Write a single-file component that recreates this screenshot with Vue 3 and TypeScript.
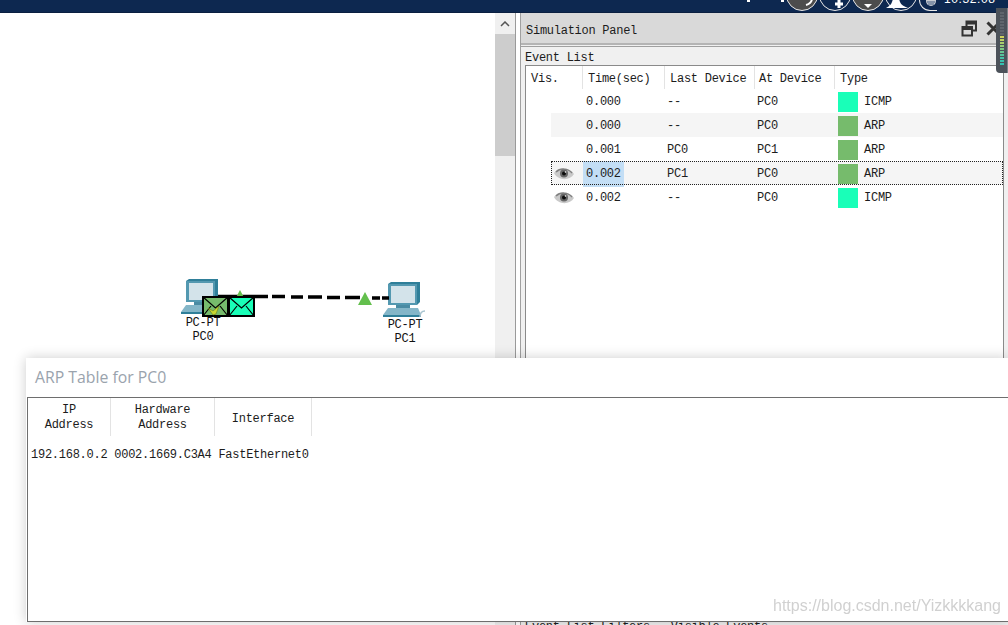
<script setup lang="ts">
interface EventRow {
  seen: boolean
  time: string
  last: string
  at: string
  type: string
  color: string
  striped?: boolean
  current?: boolean
}

const events: EventRow[] = [
  { seen: false, time: '0.000', last: '--', at: 'PC0', type: 'ICMP', color: '#19ffb8' },
  { seen: false, time: '0.000', last: '--', at: 'PC0', type: 'ARP', color: '#76bb6c', striped: true },
  { seen: false, time: '0.001', last: 'PC0', at: 'PC1', type: 'ARP', color: '#76bb6c' },
  { seen: true, time: '0.002', last: 'PC1', at: 'PC0', type: 'ARP', color: '#76bb6c', current: true },
  { seen: true, time: '0.002', last: '--', at: 'PC0', type: 'ICMP', color: '#19ffb8' }
]

const meter = ['#5f656c', '#5f656c', '#5f656c', '#5f656c', '#5f656c', '#5f656c', '#5f656c', '#5f656c', '#cdd35a', '#bdd062', '#a9cd6c', '#93ca78', '#7dc784', '#68c490', '#55c29c', '#46c0a6', '#3cc0ac', '#34c0b0']
</script>

<template>
  <div class="screen">
    <header class="taskbar">
      <span class="tray-dot dot-a"></span>
      <span class="tray-dot dot-b"></span>
      <span class="tray tray-gray"><svg width="30" height="30" viewBox="0 0 30 30"><path d="M25 19c-.5 3-2 5-6 6" fill="none" stroke="#fff" stroke-width="2" /></svg></span>
      <span class="tray"><svg width="30" height="30" viewBox="0 0 30 30"><path d="M19 20v8M15 24h8" fill="none" stroke="#fff" stroke-width="3" /></svg></span>
      <span class="tray tray-gray"><svg width="30" height="30" viewBox="0 0 30 30"><path d="M11 24h8l-4 4z" fill="#fff" /></svg></span>
      <span class="tray"><svg width="30" height="30" viewBox="0 0 30 30"><path d="M0 28c3-2 5-3 6-6l1-3h6l1 3c1 3 4 4 8 6z" fill="#fff" /></svg></span>
      <span class="tray-small"><svg width="18" height="8" viewBox="0 0 18 8"><circle cx="11" cy="1" r="5" fill="#c8ccd2" /><path d="M7 2h8M8 4h6" stroke="#405a80" stroke-width="1" /></svg></span>
      <span class="clock">10:32:08</span>
    </header>

    <main class="desk">
      <section class="workspace">
        <div class="node node-a">
          <svg class="pc" width="44" height="38" viewBox="0 0 44 38">
            <path d="M5 3l3-2h29v20l-3 3H5z" fill="#2f7f99" />
            <rect x="5" y="3" width="29" height="21" fill="#5398b0" />
            <rect x="8" y="5" width="24" height="17" fill="#d3e3ea" />
            <path d="M13 24h14v3H13z" fill="#4a8ba3" />
            <path d="M5 27h30l3 7H0z" fill="#84b6c8" />
            <path d="M0 34h38v2H0z" fill="#2f7f99" />
          </svg>
          <span class="node-label">PC-PT<br />PC0</span>
        </div>
        <div class="node node-b">
          <svg class="pc" width="44" height="38" viewBox="0 0 44 38">
            <path d="M5 3l3-2h29v20l-3 3H5z" fill="#2f7f99" />
            <rect x="5" y="3" width="29" height="21" fill="#5398b0" />
            <rect x="8" y="5" width="24" height="17" fill="#d3e3ea" />
            <path d="M13 24h14v3H13z" fill="#4a8ba3" />
            <path d="M5 27h30l3 7H0z" fill="#84b6c8" />
            <path d="M0 34h38v2H0z" fill="#2f7f99" />
            <path d="M37 36c0-4 1-6 5-6" fill="none" stroke="#a8c4d0" stroke-width="1.500" />
          </svg>
          <span class="node-label">PC-PT<br />PC1</span>
        </div>
        <svg class="link" width="172" height="8" viewBox="0 0 172 8">
          <path d="M0 3.500h50M54 3.500h13M73 4h12M90 4h14M109 4.500h13M127 4.500h15M154 5h8M164 5h7" stroke="#000" stroke-width="3.500" fill="none" />
        </svg>
        <span class="triangle triangle-back"></span>
        <span class="triangle triangle-front"></span>
        <svg class="envelope env-arp" width="27" height="21" viewBox="0 0 27 21">
          <rect x="1" y="1" width="25" height="19" fill="#76bb6c" stroke="#000" stroke-width="2" />
          <path d="M1 1l12.500 11L26 1M1 20l8-10M26 20l-8-10" fill="none" stroke="#000" stroke-width="1.200" />
          <path d="M6 12l5 3 6-5-3 8-3 1z" fill="#c8d830" stroke="#6c7a18" stroke-width="0.600" />
        </svg>
        <svg class="envelope env-icmp" width="27" height="21" viewBox="0 0 27 21">
          <rect x="1" y="1" width="25" height="19" fill="#19ffb8" stroke="#000" stroke-width="2" />
          <path d="M1 1l12.500 11L26 1M1 20l8-10M26 20l-8-10" fill="none" stroke="#000" stroke-width="1.200" />
        </svg>
      </section>

      <div class="scrollbar">
        <span class="scroll-arrow">
          <svg width="10" height="6" viewBox="0 0 10 6"><path d="M1 5l4-4 4 4" fill="none" stroke="#555" stroke-width="1.500" /></svg>
        </span>
        <span class="scroll-thumb"></span>
      </div>

      <aside class="panel">
        <div class="panel-head">
          <span class="panel-name">Simulation Panel</span>
          <svg class="restore" width="16" height="17" viewBox="0 0 16 17">
            <path d="M5.500 6V1.500h9.500v9h-4M5.500 3.500H15M1.500 7h9.500v8.500H1.500zM1.500 9H11" fill="none" stroke="#333" stroke-width="2" />
          </svg>
          <svg class="close" width="15" height="15" viewBox="0 0 15 15">
            <path d="M1.500 1.500l12 12M13.500 1.500l-12 12" fill="none" stroke="#333" stroke-width="3" />
          </svg>
        </div>
        <div class="event-box">
          <div class="event-title">Event List</div>
          <div class="event-table">
            <div class="row row-head">
              <span class="cell head-vis">Vis.</span>
              <span class="cell head-time">Time(sec)</span>
              <span class="cell head-last">Last Device</span>
              <span class="cell head-at">At Device</span>
              <span class="cell head-type">Type</span>
            </div>
            <div
              v-for="(ev, i) in events"
              :key="i"
              class="row"
              :class="{ striped: ev.striped, current: ev.current }"
            >
              <span class="cell cell-vis">
                <svg v-if="ev.seen" width="22" height="14" viewBox="0 0 22 14">
                  <path d="M1 6C5 0 16 0 21 7 17 14 5 14 1 6z" fill="#c9c9c9" />
                  <path d="M3 5c4-4 12-4 16 1" fill="none" stroke="#808080" stroke-width="1.500" />
                  <circle cx="11" cy="6.500" r="4" fill="#666" />
                  <circle cx="11" cy="6.500" r="2" fill="#0c0c0c" />
                  <circle cx="12.500" cy="5" r="0.800" fill="#fff" />
                </svg>
              </span>
              <span class="cell cell-time">{{ ev.time }}</span>
              <span class="cell">{{ ev.last }}</span>
              <span class="cell">{{ ev.at }}</span>
              <span class="cell cell-type">
                <i class="swatch" :style="{ background: ev.color }"></i>{{ ev.type }}
              </span>
            </div>
          </div>
        </div>
        <div class="filters">Event List Filters - Visible Events</div>
      </aside>
    </main>

    <div class="meter">
      <i v-for="(c, i) in meter" :key="i" :style="{ background: c }"></i>
    </div>

    <div class="arp-window">
      <div class="arp-title">ARP Table for PC0</div>
      <div class="arp-client">
        <div class="arp-head">
          <span class="arp-col col-ip">IP<br />Address</span>
          <span class="arp-col col-hw">Hardware<br />Address</span>
          <span class="arp-col col-if">Interface</span>
        </div>
        <div class="arp-row">192.168.0.2 0002.1669.C3A4 FastEthernet0</div>
      </div>
    </div>

    <div class="watermark">https://blog.csdn.net/Yizkkkkang</div>
  </div>
</template>

<style scoped>
.screen {
  position: relative;
  width: 1008px;
  height: 625px;
  overflow: hidden;
  background: #fff;
  display: flex;
  flex-direction: column;
  font-family: "Liberation Mono", "Noto Sans CJK SC", monospace;
  font-size: 12px;
  letter-spacing: -0.26px;
  color: #1c1c1c;
}

.taskbar {
  flex: none;
  height: 12px;
  background: #0d2850;
  border-bottom: 1px solid #0a1f40;
  overflow: hidden;
  display: flex;
  align-items: flex-end;
  justify-content: flex-end;
  gap: 1px;
}

.tray-dot {
  flex: none;
  align-self: flex-start;
  width: 3px;
  height: 2px;
  background: #fff;
}

.dot-a {
  margin-right: 30px;
}

.dot-b {
  margin-right: 1px;
}

.tray {
  flex: none;
  width: 32px;
  height: 32px;
  margin-bottom: 1px;
  border: 1px solid #e8e8e8;
  border-radius: 50%;
  box-sizing: border-box;
  background: #0d2850;
}

.tray-gray {
  background: #4c4c4c;
}

.tray svg,
.tray-small svg {
  display: block;
}

.tray-small {
  flex: none;
  width: 18px;
  height: 11px;
  margin: 0 0 1px 1px;
  border-left: 1px solid #e8e8e8;
  border-bottom: 1px solid #e8e8e8;
  border-radius: 0 0 0 11px;
  box-sizing: border-box;
}

.clock {
  flex: none;
  width: 70px;
  padding-left: 6px;
  margin-bottom: 7px;
  font-family: "Liberation Sans", sans-serif;
  font-size: 12px;
  letter-spacing: 0.6px;
  line-height: 12px;
  color: #fff;
  box-sizing: border-box;
}

.desk {
  flex: 1;
  min-height: 0;
  display: flex;
}

.workspace {
  position: relative;
  flex: none;
  width: 495px;
  background: #fff;
}

.node {
  position: absolute;
  width: 60px;
  display: flex;
  flex-direction: column;
  align-items: center;
}

.node-a {
  left: 173px;
  top: 265px;
}

.node-b {
  left: 375px;
  top: 268px;
}

.pc {
  display: block;
}

.node-label {
  font-size: 12px;
  line-height: 14px;
  text-align: center;
  color: #111;
}

.node-b .node-label {
  margin-top: -1px;
}

.link {
  position: absolute;
  left: 218px;
  top: 280px;
}

.triangle {
  position: absolute;
  width: 0;
  height: 0;
  border-left: 7px solid transparent;
  border-right: 7px solid transparent;
  border-bottom: 13px solid #63bf4d;
}

.triangle-back {
  left: 233px;
  top: 277px;
}

.triangle-front {
  left: 358px;
  top: 279px;
}

.envelope {
  position: absolute;
  display: block;
}

.env-arp {
  left: 202px;
  top: 283px;
}

.env-icmp {
  left: 228px;
  top: 283px;
}

.scrollbar {
  flex: none;
  width: 20px;
  background: #f0f0f0;
  border-right: 1px solid #9a9a9a;
  display: flex;
  flex-direction: column;
}

.scroll-arrow {
  height: 21px;
  display: flex;
  align-items: center;
  justify-content: center;
}

.scroll-thumb {
  height: 122px;
  background: #cdcdcd;
}

.panel {
  flex: 1;
  min-width: 0;
  margin-left: 4px;
  border-left: 1px solid #a0a0a0;
  background: #f0f0f0;
  display: flex;
  flex-direction: column;
  box-sizing: border-box;
}

.panel-head {
  flex: none;
  height: 30px;
  padding: 0 7px 0 5px;
  background: #d9d9d9;
  border-bottom: 2px solid #b4b4b4;
  display: flex;
  align-items: center;
  gap: 9px;
}

.panel-name {
  flex: 1;
  padding-top: 6px;
}

.event-box {
  flex: 1;
  min-height: 0;
  margin-top: 1px;
  border-top: 1px solid #a0a0a0;
  display: flex;
  flex-direction: column;
}

.event-title {
  flex: none;
  height: 18px;
  padding-left: 4px;
  line-height: 22px;
}

.event-table {
  flex: 1;
  min-height: 0;
  margin: 0 4px;
  border: 1px solid #8a8a8a;
  border-bottom: 0;
  background: #fff;
}

.row {
  display: grid;
  grid-template-columns: 57px 82px 90px 80px 1fr;
  height: 24px;
  box-sizing: border-box;
}

.cell {
  padding-left: 2px;
  white-space: nowrap;
  line-height: 26px;
}

.row-head {
  height: 23px;
}

.row-head .cell {
  height: 23px;
  line-height: 27px;
  padding-left: 5px;
  border-right: 1px solid #e3e3e3;
  box-sizing: border-box;
}

.row-head .head-at {
  padding-left: 4px;
}

.row-head .head-type {
  border-right: 0;
}

.cell-time {
  width: 41px;
  padding-left: 3px;
  box-sizing: border-box;
}

.striped,
.current {
  margin-left: 25px;
  grid-template-columns: 32px 82px 90px 80px 1fr;
  background: #f5f5f5;
}

.current {
  outline: 1px dotted #222;
  outline-offset: -1px;
}

.current .cell-time {
  background: #c3def5;
}

.cell-vis {
  display: flex;
  align-items: center;
  justify-content: flex-end;
  padding: 0 8px 0 0;
}

.cell-vis svg {
  display: block;
}

.cell-type {
  display: flex;
  align-items: center;
  gap: 6px;
  padding-left: 3px;
}

.swatch {
  width: 20px;
  height: 20px;
  flex: none;
}

.filters {
  flex: none;
  height: 4px;
  padding-left: 4px;
  line-height: 13px;
  overflow: hidden;
}

.meter {
  position: absolute;
  right: 0;
  top: 8px;
  width: 12px;
  height: 65px;
  box-sizing: border-box;
  padding: 4px 3px 0 4px;
  background: #4c525a;
  border-radius: 0 0 0 4px;
  border-right: 1px solid #7d8288;
  display: flex;
  flex-direction: column;
  gap: 1px;
}

.meter i {
  display: block;
  flex: none;
  height: 2px;
}

.arp-window {
  position: absolute;
  left: 26px;
  top: 358px;
  width: 982px;
  height: 264px;
  background: #fff;
  box-shadow: 0 0 12px rgba(0, 0, 0, 0.2);
  display: flex;
  flex-direction: column;
}

.arp-title {
  flex: none;
  height: 39px;
  padding-left: 9px;
  font-family: "Open Sans", "Liberation Sans", sans-serif;
  font-size: 15.8px;
  letter-spacing: 0;
  line-height: 39px;
  color: #9aa3ad;
}

.arp-client {
  flex: 1;
  min-height: 0;
  margin-left: 1px;
  border: 1px solid #6e6e6e;
  border-right: 0;
}

.arp-head {
  height: 38px;
  display: flex;
}

.arp-col {
  display: flex;
  align-items: center;
  justify-content: center;
  box-sizing: border-box;
  padding-top: 1px;
  border-right: 1px solid #e3e3e3;
  line-height: 15px;
  text-align: center;
}

.col-ip {
  width: 83px;
}

.col-hw {
  width: 104px;
}

.col-if {
  width: 97px;
  padding-top: 5px;
}

.arp-row {
  margin-top: 12px;
  padding-left: 3px;
  line-height: 14px;
  white-space: nowrap;
}

.watermark {
  position: absolute;
  left: 773px;
  top: 597px;
  font-family: "Liberation Sans", sans-serif;
  font-size: 16px;
  letter-spacing: 0;
  color: rgba(170, 170, 170, 0.55);
  filter: blur(0.4px);
}
</style>
